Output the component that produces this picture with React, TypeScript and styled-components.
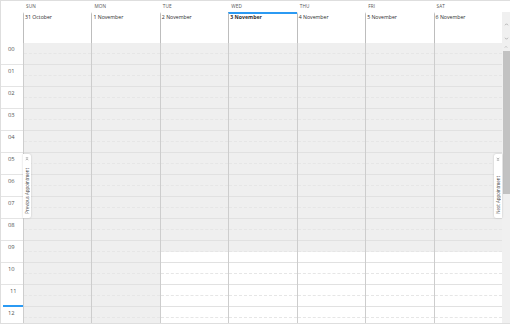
import React, { FC } from 'react';
import styled, { createGlobalStyle } from 'styled-components';

const GlobalStyle = createGlobalStyle`
  html, body {
    margin: 0;
    padding: 0;
    background: #fff;
  }
  body {
    font-family: "Open Sans", "Noto Sans", sans-serif;
    overflow: hidden;
  }
`;

const BLUE = '#2b9af3';

interface Day {
  name: string;
  date: string;
  off?: boolean;
  today?: boolean;
}

const days: Day[] = [
  { name: 'SUN', date: '31 October', off: true },
  { name: 'MON', date: '1 November', off: true },
  { name: 'TUE', date: '2 November' },
  { name: 'WED', date: '3 November', today: true },
  { name: 'THU', date: '4 November' },
  { name: 'FRI', date: '5 November' },
  { name: 'SAT', date: '6 November' },
];

const hours = Array.from({ length: 13 }, (_, i) => String(i).padStart(2, '0'));
const slots = Array.from({ length: 26 }, (_, i) => i);
// working time starts at 09:30 -> half-hour slot 19
const WORK_START = 19;

const Frame = styled.div`
  position: relative;
  width: 510px;
  height: 324px;
  box-sizing: border-box;
  border: 1px solid #dedede;
  border-right: none;
  display: flex;
  flex-direction: column;
  overflow: hidden;
`;

const Header = styled.div`
  flex: none;
  height: 42px;
  display: grid;
  grid-template-columns: 22px repeat(7, 1fr) 8px;
`;

const HeaderCell = styled.div`
  display: flex;
  flex-direction: column;
  min-width: 0;
`;

const DayName = styled.div`
  height: 11px;
  line-height: 11px;
  padding-left: 3px;
  font-size: 4.7px;
  color: #555;
  letter-spacing: 0.1px;
`;

const DateCell = styled.div<{ $today?: boolean }>`
  flex: 1;
  border-left: 1px solid #bdbdbd;
  border-top: 2px solid ${(p) => (p.$today ? BLUE : 'transparent')};
  padding-left: 1px;
  font-size: 5.2px;
  line-height: 7px;
  color: #2e2e2e;
  font-weight: ${(p) => (p.$today ? 700 : 400)};
  white-space: nowrap;
`;

const ScrollTrack = styled.div<{ $head?: boolean }>`
  margin-top: ${(p) => (p.$head ? '11px' : '0')};
  background: #f0f0f0;
  display: flex;
  flex-direction: column;
  align-items: center;
  padding: ${(p) => (p.$head ? '10px 0 1px' : '2px 0 1px')};
  gap: ${(p) => (p.$head ? '9px' : '2px')};
`;

const Thumb = styled.div`
  width: 7px;
  height: 143px;
  background: #c2c2c2;
`;

const Spacer = styled.div`
  flex: 1;
`;

const Body = styled.div`
  flex: 1;
  min-height: 0;
  display: grid;
  grid-template-columns: 22px repeat(7, 1fr) 8px;
  overflow: hidden;
`;

const Gutter = styled.div`
  display: flex;
  flex-direction: column;
`;

const HourLabel = styled.div<{ $mark?: boolean }>`
  flex: none;
  height: 22px;
  box-sizing: border-box;
  border-bottom: ${(p) => (p.$mark ? `2px solid ${BLUE}` : '1px solid #e4e4e4')};
  margin-left: ${(p) => (p.$mark ? '2px' : '0')};
  padding: 3px 0 0 7px;
  font-size: 5.8px;
  line-height: 6px;
  color: #555;
`;

const DayColumn = styled.div`
  display: flex;
  flex-direction: column;
  border-left: 1px solid #cdcdcd;
  min-width: 0;
`;

const Slot = styled.div<{ $off: boolean; $hour: boolean }>`
  flex: none;
  height: 11px;
  box-sizing: border-box;
  background: ${(p) => (p.$off ? '#efefef' : '#fff')};
  border-bottom: 1px ${(p) => (p.$hour ? 'solid #e1e1e1' : 'dashed #e6e6e6')};
`;

const NavTab = styled.div<{ $side: 'left' | 'right' }>`
  position: absolute;
  top: 153px;
  ${(p) => (p.$side === 'left' ? 'left: 22px;' : 'right: 8px;')}
  width: 8px;
  height: 64px;
  box-sizing: border-box;
  background: #fff;
  border-radius: ${(p) => (p.$side === 'left' ? '0 2px 2px 0' : '2px 0 0 2px')};
  box-shadow: 0 0 2px rgba(0, 0, 0, 0.22);
  display: flex;
  flex-direction: column;
  align-items: center;
  justify-content: space-between;
  padding: 3px 0 4px;
`;

const NavText = styled.span`
  writing-mode: vertical-rl;
  transform: rotate(180deg);
  font-size: 4.4px;
  line-height: 5px;
  color: #444;
  white-space: nowrap;
`;

const Chevron: FC<{ up?: boolean; size?: number }> = ({ up, size = 5 }) => (
  <svg width={size} height={size} viewBox="0 0 10 10" fill="none" stroke="#9a9a9a" strokeWidth="1.4">
    <path d={up ? 'M2 6.5 L5 3.5 L8 6.5' : 'M2 3.5 L5 6.5 L8 3.5'} />
  </svg>
);

const EdgeIcon: FC<{ dir: 'up' | 'down' }> = ({ dir }) => (
  <svg width="4" height="4" viewBox="0 0 10 10" fill="none" stroke="#777" strokeWidth="1.4">
    {dir === 'up' ? (
      <path d="M2 2 H8 M2 8 L5 4.5 L8 8" />
    ) : (
      <path d="M2 8 H8 M2 2 L5 5.5 L8 2" />
    )}
  </svg>
);

const App: FC = () => (
  <>
    <GlobalStyle />
    <Frame>
      <Header>
        <HeaderCell />
        {days.map((d) => (
          <HeaderCell key={d.name}>
            <DayName>{d.name}</DayName>
            <DateCell $today={d.today}>{d.date}</DateCell>
          </HeaderCell>
        ))}
        <ScrollTrack $head>
          <Chevron up />
          <Chevron />
        </ScrollTrack>
      </Header>

      <Body>
        <Gutter>
          {hours.map((h, i) => (
            <HourLabel key={h} $mark={i === 11}>
              {h}
            </HourLabel>
          ))}
        </Gutter>
        {days.map((d) => (
          <DayColumn key={d.name}>
            {slots.map((s) => (
              <Slot key={s} $off={!!d.off || s < WORK_START} $hour={s % 2 === 1} />
            ))}
          </DayColumn>
        ))}
        <ScrollTrack>
          <Chevron up size={4} />
          <Thumb />
          <Spacer />
          <Chevron size={4} />
        </ScrollTrack>
      </Body>

      <NavTab $side="left">
        <EdgeIcon dir="up" />
        <NavText>Previous Appointment</NavText>
      </NavTab>
      <NavTab $side="right">
        <EdgeIcon dir="down" />
        <NavText>Next Appointment</NavText>
      </NavTab>
    </Frame>
  </>
);

export default App;
